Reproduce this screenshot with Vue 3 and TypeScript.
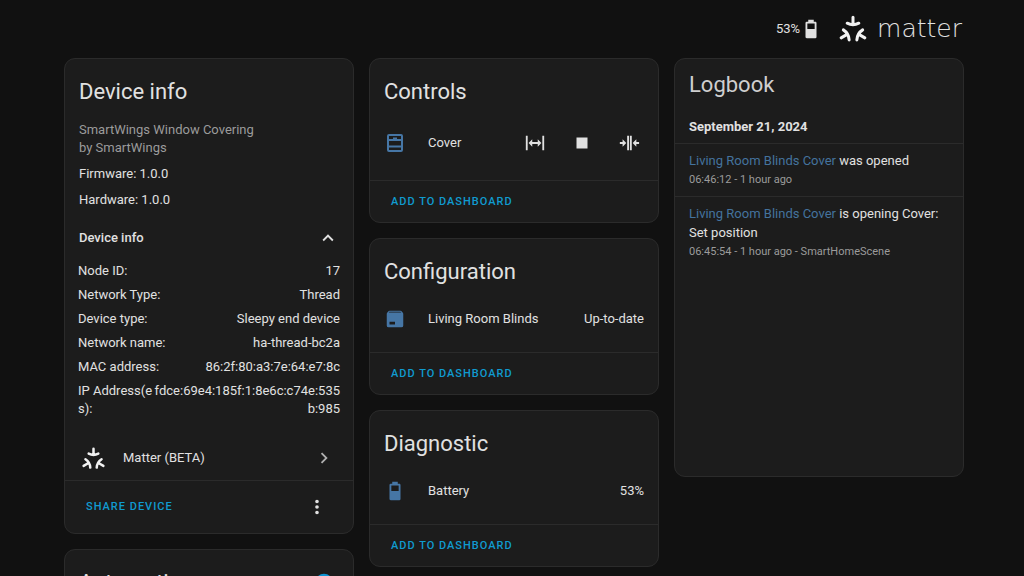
<script setup lang="ts">
import { ref } from 'vue'

interface Detail {
  label: string
  value: string
}

interface LogEntry {
  entity: string
  message: string
  meta: string
}

const icons = {
  battery:
    'M16,12H8V6H16M16.67,4H15V2H9V4H7.33A1.33,1.33 0 0,0 6,5.33V20.67C6,21.4 6.6,22 7.33,22H16.67A1.33,1.33 0 0,0 18,20.67V5.33C18,4.6 17.4,4 16.67,4Z',
  package:
    'M5.12,5H18.87L17.93,4H5.93L5.12,5M20.54,5.23C20.83,5.57 21,6 21,6.5V19A2,2 0 0,1 19,21H5A2,2 0 0,1 3,19V6.5C3,6 3.17,5.57 3.46,5.23L4.84,3.55C5.12,3.21 5.53,3 6,3H18C18.47,3 18.88,3.21 19.15,3.55L20.54,5.23M6,18H12V15H6V18Z',
  open: 'M9,11H15V8L19,12L15,16V13H9V16L5,12L9,8V11M2,20V4H4V20H2M20,20V4H22V20H20Z',
  stop: 'M18,18H6V6H18V18Z',
  close:
    'M13,20V4H15.03V20H13M10,20V4H12.03V20H10M5,8L9.03,12L5,16V13H2V11H5V8M20,16L16,12L20,8V11H23V13H20V16Z',
  chevronUp: 'M7.41,15.41L12,10.83L16.59,15.41L18,14L12,8L6,14L7.41,15.41Z',
  chevronRight: 'M8.59,16.58L13.17,12L8.59,7.41L10,6L16,12L10,18L8.59,16.58Z',
  dots: 'M12,16A2,2 0 0,1 14,18A2,2 0 0,1 12,20A2,2 0 0,1 10,18A2,2 0 0,1 12,16M12,10A2,2 0 0,1 14,12A2,2 0 0,1 12,14A2,2 0 0,1 10,12A2,2 0 0,1 12,10M12,4A2,2 0 0,1 14,6A2,2 0 0,1 12,8A2,2 0 0,1 10,6A2,2 0 0,1 12,4Z',
  plus: 'M17,13H13V17H11V13H7V11H11V7H13V11H17M12,2A10,10 0 0,0 2,12A10,10 0 0,0 12,22A10,10 0 0,0 22,12A10,10 0 0,0 12,2Z',
}

const arrow = 'M0 -13.7V-6.3M-5.8 -7.8Q0 -4.8 5.8 -7.8'
const arrowAngles = [0, 120, 240]

const details: Detail[] = [
  { label: 'Node ID:', value: '17' },
  { label: 'Network Type:', value: 'Thread' },
  { label: 'Device type:', value: 'Sleepy end device' },
  { label: 'Network name:', value: 'ha-thread-bc2a' },
  { label: 'MAC address:', value: '86:2f:80:a3:7e:64:e7:8c' },
  { label: 'IP Address(es):', value: 'fdce:69e4:185f:1:8e6c:c74e:535b:985' },
]

const entries: LogEntry[] = [
  { entity: 'Living Room Blinds Cover', message: 'was opened', meta: '06:46:12 - 1 hour ago' },
  {
    entity: 'Living Room Blinds Cover',
    message: 'is opening Cover: Set position',
    meta: '06:45:54 - 1 hour ago - SmartHomeScene',
  },
]

const coverActions = [
  { name: 'Open cover', path: icons.open },
  { name: 'Stop cover', path: icons.stop },
  { name: 'Close cover', path: icons.close },
]

const expanded = ref(true)
</script>

<template>
  <div class="page">
    <header class="top">
      <span>53%</span>
      <svg class="icon" viewBox="0 0 24 24" aria-hidden="true"><path :d="icons.battery" /></svg>
      <div class="brand">
        <svg class="mark mark-large" viewBox="-15 -17 30 30" aria-hidden="true">
          <path v-for="a in arrowAngles" :key="a" :transform="`rotate(${a})`" :d="arrow" />
        </svg>
        <span class="wordmark">matter</span>
      </div>
    </header>

    <main class="columns">
      <div class="column">
        <section class="card">
          <h1 class="title">Device info</h1>
          <div class="info">
            <p class="model">SmartWings Window Covering<br />by SmartWings</p>
            <p class="version">Firmware: 1.0.0</p>
            <p class="version">Hardware: 1.0.0</p>
            <button class="expander" type="button" :aria-expanded="expanded" @click="expanded = !expanded">
              <span>Device info</span>
              <svg class="icon" :class="{ flipped: !expanded }" viewBox="0 0 24 24" aria-hidden="true">
                <path :d="icons.chevronUp" />
              </svg>
            </button>
            <dl v-show="expanded" class="details">
              <div v-for="d in details" :key="d.label" class="detail">
                <dt>{{ d.label }}</dt>
                <dd>{{ d.value }}</dd>
              </div>
            </dl>
          </div>
          <a class="integration" href="#matter">
            <svg class="mark mark-small" viewBox="-15 -17 30 30" aria-hidden="true">
              <path v-for="a in arrowAngles" :key="a" :transform="`rotate(${a})`" :d="arrow" />
            </svg>
            <span class="grow">Matter (BETA)</span>
            <svg class="icon muted" viewBox="0 0 24 24" aria-hidden="true"><path :d="icons.chevronRight" /></svg>
          </a>
          <footer class="actions tall">
            <button class="text-button" type="button">Share device</button>
            <button class="icon-button" type="button" aria-label="More options">
              <svg class="icon" viewBox="0 0 24 24" aria-hidden="true"><path :d="icons.dots" /></svg>
            </button>
          </footer>
        </section>

        <section class="card">
          <div class="title-row">
            <h1 class="title">Automations</h1>
            <button class="add" type="button" aria-label="Add automation">
              <svg class="icon" viewBox="0 0 24 24" aria-hidden="true"><path :d="icons.plus" /></svg>
            </button>
          </div>
        </section>
      </div>

      <div class="column">
        <section class="card">
          <h1 class="title">Controls</h1>
          <div class="entity">
            <svg class="icon outline" viewBox="0 0 22 22" aria-hidden="true">
              <rect x="4" y="3" width="14" height="16" rx="1" />
              <path d="M4 8H18M4 14.5H18M9 6.5H13" />
            </svg>
            <span class="grow">Cover</span>
            <div class="cover-buttons">
              <button v-for="c in coverActions" :key="c.name" class="icon-button" type="button" :aria-label="c.name">
                <svg class="icon" viewBox="0 0 24 24" aria-hidden="true"><path :d="c.path" /></svg>
              </button>
            </div>
          </div>
          <footer class="actions">
            <button class="text-button" type="button">Add to dashboard</button>
          </footer>
        </section>

        <section class="card">
          <h1 class="title">Configuration</h1>
          <div class="entity">
            <svg class="icon blue" viewBox="0 0 24 24" aria-hidden="true"><path :d="icons.package" /></svg>
            <span class="grow">Living Room Blinds</span>
            <span>Up-to-date</span>
          </div>
          <footer class="actions">
            <button class="text-button" type="button">Add to dashboard</button>
          </footer>
        </section>

        <section class="card">
          <h1 class="title">Diagnostic</h1>
          <div class="entity">
            <svg class="icon blue" viewBox="0 0 24 24" aria-hidden="true"><path :d="icons.battery" /></svg>
            <span class="grow">Battery</span>
            <span>53%</span>
          </div>
          <footer class="actions">
            <button class="text-button" type="button">Add to dashboard</button>
          </footer>
        </section>
      </div>

      <div class="column">
        <section class="card logbook">
          <h1 class="title">Logbook</h1>
          <div class="log">
            <h2 class="date">September 21, 2024</h2>
            <article v-for="e in entries" :key="e.meta" class="entry">
              <p><a href="#cover">{{ e.entity }}</a> {{ e.message }}</p>
              <p class="meta">{{ e.meta }}</p>
            </article>
          </div>
        </section>
      </div>
    </main>
  </div>
</template>

<style>
html {
  background: #111111;
  scrollbar-width: none;
}
</style>

<style scoped>
.page {
  height: 100vh;
  overflow: hidden;
  background: #111111;
  color: #e1e1e1;
  font-family: Roboto, 'Liberation Sans', sans-serif;
  font-size: 13px;
  line-height: 18px;
}

h1,
h2,
p,
dl,
dd {
  margin: 0;
}

button {
  border: 0;
  padding: 0;
  background: none;
  color: inherit;
  font: inherit;
  cursor: pointer;
}

a {
  text-decoration: none;
}

.icon {
  display: block;
  flex: none;
  width: 22px;
  height: 22px;
  fill: currentColor;
}

.muted {
  color: #b0b0b0;
}

.blue {
  color: #4676a5;
}

.outline {
  fill: none;
  stroke: #4676a5;
  stroke-width: 2;
}

.flipped {
  transform: rotate(180deg);
}

.grow {
  flex: 1;
}

.top {
  display: flex;
  align-items: center;
  justify-content: flex-end;
  height: 58px;
  padding-right: 62px;
}

.brand {
  display: flex;
  align-items: center;
  margin-left: 16px;
}

.mark {
  flex: none;
  fill: none;
  stroke: #f2f2f2;
  stroke-width: 3;
  stroke-linecap: round;
}

.mark-large {
  width: 30px;
  height: 30px;
}

.mark-small {
  width: 25px;
  height: 25px;
}

.wordmark {
  margin-left: 9px;
  font-family: 'DejaVu Sans', sans-serif;
  font-size: 25px;
  font-weight: 200;
  line-height: 40px;
}

.columns {
  display: grid;
  grid-template-columns: repeat(3, minmax(0, 1fr));
  gap: 15px;
  padding: 0 60px 0 64px;
}

.column {
  display: flex;
  flex-direction: column;
  gap: 15px;
}

.card {
  border: 1px solid #2b2b2b;
  border-radius: 11px;
  background: #1c1c1c;
}

.title {
  padding: 11px 14px 0;
  font-size: 22px;
  font-weight: 400;
  line-height: 44px;
}

.title-row {
  display: flex;
  justify-content: space-between;
  align-items: center;
  padding-bottom: 48px;
}

.add {
  margin: 11px 18px 0 0;
  color: #0d93d2;
}

.info {
  padding: 7px 14px 0;
}

.model {
  color: #9b9b9b;
}

.version {
  margin-top: 8px;
}

.expander {
  display: flex;
  align-items: center;
  justify-content: space-between;
  width: 100%;
  height: 40px;
  margin-top: 9px;
  font-weight: 500;
}

.details {
  margin: 4px -1px 0;
}

.detail {
  display: flex;
  justify-content: space-between;
  padding-bottom: 6px;
  word-break: break-all;
}

.detail:last-child {
  padding-bottom: 0;
}

.detail dd {
  text-align: right;
}

.integration {
  display: flex;
  align-items: center;
  height: 44px;
  margin-top: 18px;
  padding: 0 18px 0 16px;
  color: inherit;
}

.integration .grow {
  margin-left: 17px;
}

.actions {
  display: flex;
  align-items: center;
  justify-content: space-between;
  height: 41px;
  padding: 0 14px 0 21px;
  border-top: 1px solid #2b2b2b;
}

.tall {
  height: 52px;
}

.text-button {
  color: #109bd0;
  font-size: 11px;
  font-weight: 500;
  letter-spacing: 1px;
  text-transform: uppercase;
}

.icon-button {
  display: grid;
  place-items: center;
  width: 44px;
  height: 44px;
}

.entity {
  display: flex;
  align-items: center;
  min-height: 36px;
  padding: 7px 14px 15px;
}

.entity .grow {
  margin-left: 22px;
}

.cover-buttons {
  display: flex;
  gap: 3px;
  margin-right: -7px;
}

.logbook .title {
  padding-top: 4px;
  color: #cfcfcf;
}

.log {
  min-height: 369px;
  line-height: 19px;
}

.date {
  padding: 3px 14px 0;
  font-size: 13px;
  font-weight: 700;
  line-height: 33px;
}

.entry {
  padding: 7px 14px;
  border-top: 1px solid #2b2b2b;
}

.entry a {
  color: #44739e;
}

.meta {
  color: #9b9b9b;
  font-size: 11px;
}
</style>
